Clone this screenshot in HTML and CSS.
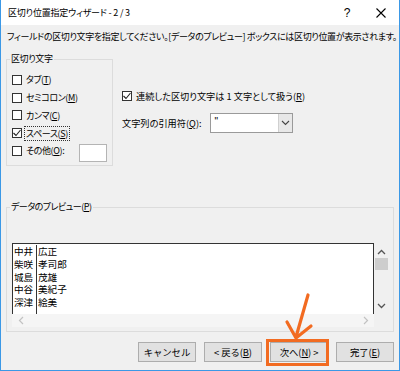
FILE: index.html
```html
<!DOCTYPE html>
<html lang="ja">
<head>
    <meta charset="UTF-8">
    <title>区切り位置指定ウィザード - 2 / 3</title>
    <link rel="stylesheet" href="styles.css">
</head>
<body>
    <div class="window">
        <!-- Title bar -->
        <div class="titlebar">
            <span class="title">区切り位置指定ウィザード - 2 / 3</span>
            <span class="title-btn">?</span>
            <span class="title-btn">
                <svg width="10" height="10" viewBox="0 0 10 10"><path d="M0.5 0.5 L9.5 9.5 M9.5 0.5 L0.5 9.5" stroke="#000" stroke-width="1.1"/></svg>
            </span>
        </div>

        <div class="content">
            <p class="intro">フィールドの区切り文字を指定してください。[データのプレビュー] ボックスには区切り位置が表示されます。</p>

            <div class="options">
                <!-- Delimiters -->
                <fieldset class="group delims">
                    <legend>区切り文字</legend>
                    <div class="check-list">
                        <div class="check-row"><span class="box"></span><span class="label">タブ(<u>T</u>)</span></div>
                        <div class="check-row"><span class="box"></span><span class="label">セミコロン(<u>M</u>)</span></div>
                        <div class="check-row"><span class="box"></span><span class="label">カンマ(<u>C</u>)</span></div>
                        <div class="check-row"><span class="box checked"><svg width="10" height="10" viewBox="0 0 10 10"><path d="M1.5 5 L4 7.5 L8.5 2" fill="none" stroke="#222" stroke-width="1.1"/></svg></span><span class="label focus">スペース(<u>S</u>)</span></div>
                        <div class="check-row"><span class="box"></span><span class="label">その他(<u>O</u>):</span><span class="other-input"></span></div>
                    </div>
                </fieldset>

                <div class="side">
                    <div class="check-row"><span class="box checked"><svg width="10" height="10" viewBox="0 0 10 10"><path d="M1.5 5 L4 7.5 L8.5 2" fill="none" stroke="#222" stroke-width="1.1"/></svg></span><span class="label">連続した区切り文字は 1 文字として扱う(<u>R</u>)</span></div>
                    <div class="quote-row">
                        <span class="label">文字列の引用符(<u>Q</u>):</span>
                        <div class="select">
                            <span class="select-value">"</span>
                            <span class="select-arrow"><svg width="9" height="6" viewBox="0 0 9 6"><path d="M1 1 L4.5 4.5 L8 1" fill="none" stroke="#444" stroke-width="1.1"/></svg></span>
                        </div>
                    </div>
                </div>
            </div>

            <!-- Data preview -->
            <fieldset class="group preview">
                <legend>データのプレビュー(<u>P</u>)</legend>
                <div class="pv">
                    <div class="pv-data">
                        <div class="pv-col first">
                            <div>中井</div><div>柴咲</div><div>城島</div><div>中谷</div><div>深津</div>
                        </div>
                        <div class="pv-col">
                            <div>広正</div><div>孝司郎</div><div>茂雄</div><div>美紀子</div><div>絵美</div>
                        </div>
                    </div>
                    <div class="vscroll">
                        <svg width="9" height="6" viewBox="0 0 9 6"><path d="M1 5 L4.5 1.5 L8 5" fill="none" stroke="#555" stroke-width="1.3"/></svg>
                        <span class="thumb"></span>
                        <span class="spacer"></span>
                        <svg width="9" height="6" viewBox="0 0 9 6"><path d="M1 1 L4.5 4.5 L8 1" fill="none" stroke="#555" stroke-width="1.3"/></svg>
                    </div>
                    <div class="hscroll">
                        <svg width="6" height="9" viewBox="0 0 6 9"><path d="M5 1 L1.5 4.5 L5 8" fill="none" stroke="#c2c2c2" stroke-width="1.2"/></svg>
                        <svg width="6" height="9" viewBox="0 0 6 9"><path d="M1 1 L4.5 4.5 L1 8" fill="none" stroke="#c2c2c2" stroke-width="1.2"/></svg>
                    </div>
                    <div class="corner"></div>
                </div>
            </fieldset>

            <div class="buttons">
                <button type="button">キャンセル</button>
                <button type="button">&lt; 戻る(<u>B</u>)</button>
                <button type="button">次へ(<u>N</u>) &gt;</button>
                <button type="button">完了(<u>E</u>)</button>
            </div>
        </div>

        <!-- Orange annotation over the Next button -->
        <svg class="pointer" width="400" height="371" viewBox="0 0 400 371">
            <rect x="267.5" y="340.5" width="60" height="24" fill="none" stroke="#f26b21" stroke-width="3"/>
            <path d="M308 295 L296 337 M287 322 L296 338 L311 326" fill="none" stroke="#f26b21" stroke-width="3.2" stroke-linecap="round" stroke-linejoin="round"/>
        </svg>
    </div>
</body>
</html>
```

FILE: styles.css
```css
body {
    margin: 0;
    font-family: "Noto Sans CJK JP", "Noto Sans", sans-serif;
    font-size: 9px;
    letter-spacing: -0.4px;
    color: #000;
    font-feature-settings: "palt";
}
.window {
    position: relative;
    width: 400px;
    height: 371px;
    box-sizing: border-box;
    border: 1px solid #3b98e6;
    border-top: none;
    background-color: #f0f0f0;
    overflow: hidden;
}
.titlebar {
    display: flex;
    align-items: center;
    height: 25px;
    padding-left: 7px;
    padding-right: 1px;
    background-color: #fff;
}
.title {
    flex: 1;
    line-height: 14px;
    letter-spacing: -0.2px;
}
.title-btn {
    display: flex;
    align-items: center;
    justify-content: center;
    width: 34px;
    height: 25px;
    font-family: "Liberation Sans", sans-serif;
    font-size: 12px;
}
.content {
    padding: 0 5px;
}
.intro {
    margin: 0;
    padding: 5px 0 0 1px;
    line-height: 14px;
    letter-spacing: -0.36px;
    white-space: nowrap;
}
.options {
    display: flex;
    margin-top: 8px;
}
.group {
    margin: 0;
    border: 1px solid #dcdcdc;
    min-width: 0;
    box-sizing: border-box;
}
.group legend {
    padding: 0 1px;
    margin-left: -2px;
    line-height: 14px;
}
.delims {
    width: 107px;
    height: 114px;
    padding: 5px 5px 0 5px;
}
.check-row {
    display: flex;
    align-items: center;
    height: 17.75px;
    white-space: nowrap;
}
.box {
    display: flex;
    align-items: center;
    justify-content: center;
    width: 10px;
    height: 10px;
    box-sizing: border-box;
    border: 1px solid #333;
    background-color: #fff;
    margin-right: 4px;
    flex-shrink: 0;
}
.box svg {
    flex-shrink: 0;
}
.label {
    line-height: 13px;
}
.focus {
    border: 1px dotted #333;
    padding: 0 1px;
    margin-left: -2px;
}
.other-input {
    width: 28px;
    height: 18px;
    box-sizing: border-box;
    margin-left: auto;
    margin-top: 5px;
    border: 1px solid #b4b4b4;
    background-color: #fff;
}
.side {
    display: flex;
    flex-direction: column;
    margin-left: 9px;
    padding-top: 37px;
    font-size: 9.2px;
    letter-spacing: 0;
}
.side .check-row {
    height: 14px;
}
.quote-row {
    display: flex;
    align-items: center;
    margin-top: 10px;
    height: 20px;
}
.select {
    display: flex;
    width: 83px;
    height: 20px;
    box-sizing: border-box;
    margin-left: 8px;
    border: 1px solid #9a9a9a;
    background-color: #fff;
}
.select-value {
    flex: 1;
    padding-left: 4px;
    line-height: 16px;
    font-family: "Liberation Sans", sans-serif;
    font-size: 10px;
}
.select-arrow {
    display: flex;
    align-items: center;
    justify-content: center;
    width: 13px;
    background-color: #e8e8e8;
    border-left: 1px solid #d0d0d0;
}
.preview {
    width: 388px;
    margin-top: 34px;
    padding: 29px 4px 4px 5px;
}
.preview legend {
    letter-spacing: -0.5px;
}
.pv {
    display: grid;
    grid-template-columns: 1fr 15px;
    grid-template-rows: 71px 13px;
}
.pv-data {
    display: flex;
    background-color: #fff;
    border: 1px solid #333;
    border-bottom: none;
    padding-top: 1px;
    font-size: 9.6px;
    letter-spacing: 0;
    line-height: 12.75px;
    overflow: hidden;
}
.pv-col {
    padding-left: 1px;
}
.pv-col.first {
    width: 22px;
    border-right: 1px solid #333;
}
.vscroll {
    display: flex;
    flex-direction: column;
    align-items: center;
    padding-top: 6px;
    padding-bottom: 5px;
    background-color: #f0f0f0;
}
.thumb {
    width: 13px;
    height: 12px;
    margin-top: 3px;
    background-color: #cdcdcd;
}
.spacer {
    flex: 1;
}
.hscroll {
    display: flex;
    justify-content: space-between;
    align-items: center;
    padding: 0 5px 0 6px;
    background-color: #f5f5f5;
}
.corner {
    background-color: #f0f0f0;
}
.buttons {
    display: flex;
    justify-content: flex-end;
    gap: 8px;
    margin-top: 10px;
}
.buttons button {
    width: 58px;
    height: 20px;
    padding: 0;
    font-family: inherit;
    font-size: 9.4px;
    letter-spacing: -0.1px;
    color: #000;
    background-color: #e1e1e1;
    border: 1px solid #adadad;
}
.pointer {
    position: absolute;
    left: -1px;
    top: 0;
    pointer-events: none;
}
```
